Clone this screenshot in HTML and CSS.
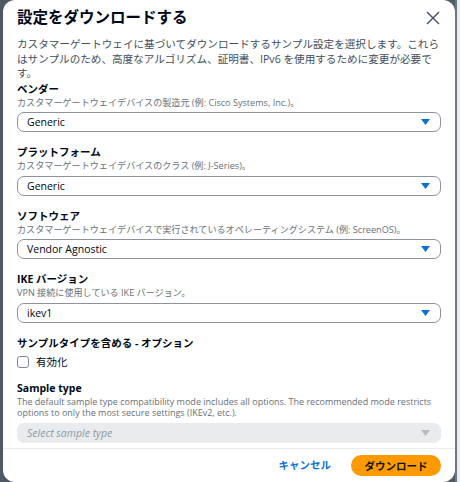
FILE: index.html
```html
<!DOCTYPE html>
<html lang="ja">
<head>
<meta charset="utf-8">
<link rel="stylesheet" href="styles.css">
</head>
<body>
<div class="modal">
  <div class="header">
    <h1 class="title">設定をダウンロードする</h1>
    <svg class="close" width="14" height="14" viewBox="0 0 14 14"><path d="M1 1 L13 13 M13 1 L1 13" stroke="#414d5c" stroke-width="1.4" fill="none"/></svg>
  </div>
  <div class="content">
    <p class="intro">カスタマーゲートウェイに基づいてダウンロードするサンプル設定を選択します。これらはサンプルのため、高度なアルゴリズム、証明書、IPv6 を使用するために変更が必要です。</p>
    <div class="field">
      <div class="label">ベンダー</div>
      <div class="hint">カスタマーゲートウェイデバイスの製造元 (例: Cisco Systems, Inc.)。</div>
      <div class="select"><span>Generic</span><svg class="caret" width="9" height="6" viewBox="0 0 9 6"><path d="M0 0 H9 L4.5 6 Z" fill="#0972d3"/></svg></div>
    </div>
    <div class="field">
      <div class="label">プラットフォーム</div>
      <div class="hint">カスタマーゲートウェイデバイスのクラス (例: J-Series)。</div>
      <div class="select"><span>Generic</span><svg class="caret" width="9" height="6" viewBox="0 0 9 6"><path d="M0 0 H9 L4.5 6 Z" fill="#0972d3"/></svg></div>
    </div>
    <div class="field">
      <div class="label">ソフトウェア</div>
      <div class="hint">カスタマーゲートウェイデバイスで実行されているオペレーティングシステム (例: ScreenOS)。</div>
      <div class="select"><span>Vendor Agnostic</span><svg class="caret" width="9" height="6" viewBox="0 0 9 6"><path d="M0 0 H9 L4.5 6 Z" fill="#0972d3"/></svg></div>
    </div>
    <div class="field">
      <div class="label">IKE バージョン</div>
      <div class="hint">VPN 接続に使用している IKE バージョン。</div>
      <div class="select"><span>ikev1</span><svg class="caret" width="9" height="6" viewBox="0 0 9 6"><path d="M0 0 H9 L4.5 6 Z" fill="#0972d3"/></svg></div>
    </div>
    <div class="field">
      <div class="label">サンプルタイプを含める - オプション</div>
      <label class="check"><span class="box"></span><span>有効化</span></label>
    </div>
    <div class="field sample">
      <div class="label">Sample type</div>
      <div class="hint en">The default sample type compatibility mode includes all options. The recommended mode restricts options to only the most secure settings (IKEv2, etc.).</div>
      <div class="select disabled"><span>Select sample type</span><svg class="caret" width="9" height="6" viewBox="0 0 9 6"><path d="M0 0 H9 L4.5 6 Z" fill="#b4bbc4"/></svg></div>
    </div>
  </div>
  <div class="footer">
    <button class="link">キャンセル</button>
    <button class="primary">ダウンロード</button>
  </div>
</div>
</body>
</html>
```

FILE: styles.css
```css
html, body {
  margin: 0;
  padding: 0;
}
body {
  width: 460px;
  height: 482px;
  overflow: hidden;
  background: linear-gradient(to right, #4f5966 0 455px, #6d7683 455px 457px, #e9ecef 457px);
  font-family: "Open Sans", "Noto Sans CJK JP", sans-serif;
  color: #000716;
}
.modal {
  margin-left: 3px;
  width: 452px;
  height: 482px;
  background: #fff;
  border-radius: 12px;
  box-sizing: border-box;
  display: flex;
  flex-direction: column;
}
.header {
  display: flex;
  align-items: center;
  justify-content: space-between;
  padding: 7px 15px 0 14px;
}
.title {
  margin: 0;
  font-size: 15.5px;
  line-height: 20px;
  font-weight: 700;
  color: #000716;
}
.close {
  display: block;
  margin-top: 2px;
}
.content {
  padding: 0 14px;
  flex: 1;
}
.intro {
  margin: 10px 0 0;
  font-size: 10.6px;
  line-height: 14.5px;
  color: #414d5c;
}
.field {
  margin-top: 13px;
}
.intro + .field {
  margin-top: 1px;
}
.label {
  font-size: 10.5px;
  line-height: 14px;
  font-weight: 700;
  color: #000716;
}
.hint {
  font-size: 9.1px;
  line-height: 13px;
  color: #687078;
}
.hint.en {
  font-size: 9px;
  line-height: 11.5px;
  padding-top: 1px;
}
.select {
  margin-top: 3.5px;
  height: 20px;
  box-sizing: border-box;
  border: 1px solid #8c939c;
  border-radius: 7px;
  display: flex;
  align-items: center;
  justify-content: space-between;
  padding: 0 10px 0 9px;
  font-size: 10.5px;
  color: #000716;
}
.select.disabled {
  border-color: #e9ebed;
  background: #e9ebed;
  color: #8d99a8;
  font-style: italic;
  margin-top: 4px;
}
.caret {
  display: block;
}
.check {
  display: flex;
  align-items: center;
  gap: 7px;
  margin-top: 4px;
  height: 16px;
  font-size: 10.5px;
  color: #000716;
}
.box {
  width: 12px;
  height: 12px;
  box-sizing: border-box;
  border: 1px solid #7d8998;
  border-radius: 3px;
  background: #fff;
}
.sample {
  margin-top: 11px;
}
.footer {
  border-top: 1px solid #e9ebed;
  height: 33px;
  display: flex;
  align-items: center;
  justify-content: flex-end;
  gap: 10px;
  padding: 0 14px 0 0;
}
.link {
  border: none;
  background: none;
  font-family: inherit;
  font-size: 10.5px;
  font-weight: 700;
  color: #0972d3;
  padding: 0 10px;
  line-height: 21px;
}
.primary {
  border: none;
  background: #ff9900;
  font-family: inherit;
  font-size: 10.5px;
  font-weight: 700;
  color: #0f141a;
  width: 90px;
  height: 21px;
  border-radius: 11px;
  padding: 0;
}
```
